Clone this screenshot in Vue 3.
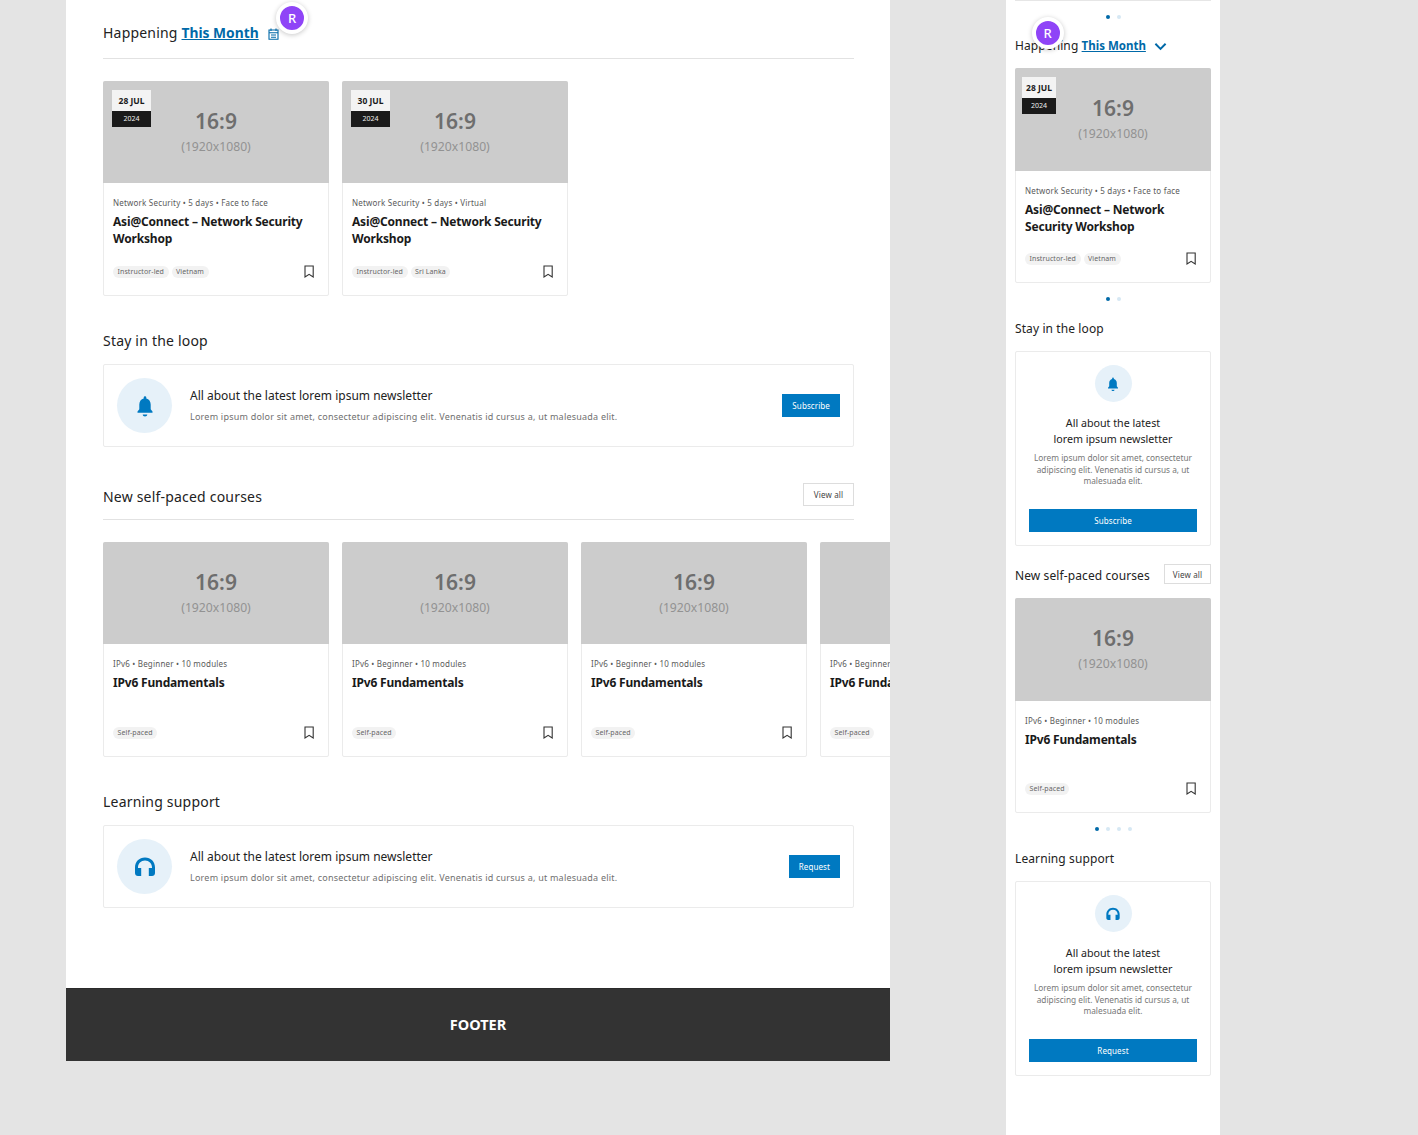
<script setup>
const happening = [
  { day: '28 JUL', meta: 'Network Security • 5 days • Face to face', title: 'Asi@Connect – Network Security Workshop', tags: ['Instructor-led', 'Vietnam'] },
  { day: '30 JUL', meta: 'Network Security • 5 days • Virtual', title: 'Asi@Connect – Network Security Workshop', tags: ['Instructor-led', 'Sri Lanka'] },
]
const course = { meta: 'IPv6 • Beginner • 10 modules', title: 'IPv6 Fundamentals', tags: ['Self-paced'] }
const courses = [course, course, course, course]
const mobileHappening = [happening[0]]
const desc = 'Lorem ipsum dolor sit amet, consectetur adipiscing elit. Venenatis id cursus a, ut malesuada elit.'
const banners = {
  loop: { title: 'All about the latest lorem ipsum newsletter', action: 'Subscribe' },
  support: { title: 'All about the latest lorem ipsum newsletter', action: 'Request' },
}
</script>

<template>
  <div class="page">
    <main class="desk">
      <div class="content">
        <div class="head first">
          <h2 class="h">Happening <a class="month">This Month</a>
            <svg class="cal" viewBox="0 0 11 12" width="11" height="12"><path d="M3 .5v2.500M8 .5v2.500M1 2h9v9.300H1zM1 4.800h9M3 7h5M3 9.200h5" fill="none" stroke="#0069a8" stroke-width="1.100"/></svg>
          </h2>
        </div>
        <div class="row">
          <article v-for="c in happening" :key="c.day" class="card">
            <div class="thumb">
              <div class="date"><b>{{ c.day }}</b><span>2024</span></div>
              <strong>16:9</strong><em>(1920x1080)</em>
            </div>
            <div class="body">
              <p class="meta">{{ c.meta }}</p>
              <h3>{{ c.title }}</h3>
              <div class="foot">
                <span v-for="t in c.tags" :key="t" class="tag">{{ t }}</span>
                <svg class="mark" viewBox="0 0 12 13" width="12" height="13"><path d="M2 1h8.200v11L6.100 9.300 2 12z" fill="none" stroke="#333" stroke-width="1.100"/></svg>
              </div>
            </div>
          </article>
        </div>

        <h2 class="h plain">Stay in the loop</h2>
        <section class="banner">
          <div class="round">
            <svg viewBox="0 0 24 24" width="24" height="24"><path fill="#0079c1" d="M12 22.500c1.300 0 2.300-.9 2.300-2h-4.600c0 1.100 1 2 2.300 2zM19.500 17.500l-1.800-2.200V10.500c0-3-1.700-5.400-4.400-6V3.600a1.300 1.300 0 0 0-2.600 0v.9c-2.700.6-4.400 3-4.400 6v4.800l-1.800 2.200v1.300h15z"/></svg>
          </div>
          <div class="text">
            <h4>{{ banners.loop.title }}</h4>
            <p>{{ desc }}</p>
          </div>
          <button class="cta">{{ banners.loop.action }}</button>
        </section>

        <div class="head second">
          <h2 class="h">New self-paced courses</h2>
          <button class="ghost">View all</button>
        </div>
        <div class="row">
          <article v-for="(c, i) in courses" :key="i" class="card">
            <div class="thumb"><strong>16:9</strong><em>(1920x1080)</em></div>
            <div class="body">
              <p class="meta">{{ c.meta }}</p>
              <h3>{{ c.title }}</h3>
              <div class="foot">
                <span v-for="t in c.tags" :key="t" class="tag">{{ t }}</span>
                <svg class="mark" viewBox="0 0 12 13" width="12" height="13"><path d="M2 1h8.200v11L6.100 9.300 2 12z" fill="none" stroke="#333" stroke-width="1.100"/></svg>
              </div>
            </div>
          </article>
        </div>

        <h2 class="h plain">Learning support</h2>
        <section class="banner">
          <div class="round">
            <svg viewBox="0 0 24 24" width="24" height="24"><path fill="#0079c1" d="M12 2.500C6.200 2.500 2 6.800 2 12.500v5.500c0 1.700 1.300 3 3 3h3.200v-8H5v-.5c0-4 3-7 7-7s7 3 7 7v.5h-3.200v8H19c1.700 0 3-1.300 3-3v-5.500c0-5.700-4.200-10-10-10z"/></svg>
          </div>
          <div class="text">
            <h4>{{ banners.support.title }}</h4>
            <p>{{ desc }}</p>
          </div>
          <button class="cta">{{ banners.support.action }}</button>
        </section>
      </div>
      <footer class="footer">FOOTER</footer>
    </main>

    <aside class="mob">
      <div class="stub"></div>
      <div class="dots"><i class="on"></i><i></i></div>
      <h2 class="h mhead">Happening <a class="month">This Month</a>
        <svg class="chev" viewBox="0 0 14 9" width="13" height="9"><path d="M1.500 1.500 7 7l5.500-5.500" fill="none" stroke="#0069a8" stroke-width="2.100"/></svg>
      </h2>
      <article v-for="c in mobileHappening" :key="c.day" class="card mcard">
        <div class="thumb">
          <div class="date small"><b>{{ c.day }}</b><span>2024</span></div>
          <strong>16:9</strong><em>(1920x1080)</em>
        </div>
        <div class="body">
          <p class="meta">{{ c.meta }}</p>
          <h3>{{ c.title }}</h3>
          <div class="foot">
            <span v-for="t in c.tags" :key="t" class="tag">{{ t }}</span>
            <svg class="mark" viewBox="0 0 12 13" width="12" height="13"><path d="M2 1h8.200v11L6.100 9.300 2 12z" fill="none" stroke="#333" stroke-width="1.100"/></svg>
          </div>
        </div>
      </article>
      <div class="dots"><i class="on"></i><i></i></div>

      <h2 class="h mtitle">Stay in the loop</h2>
      <section class="mbanner">
        <div class="round sm">
          <svg viewBox="0 0 24 24" width="16" height="16"><path fill="#0079c1" d="M12 22.500c1.300 0 2.300-.9 2.300-2h-4.600c0 1.100 1 2 2.300 2zM19.500 17.500l-1.800-2.200V10.500c0-3-1.700-5.400-4.400-6V3.600a1.300 1.300 0 0 0-2.600 0v.9c-2.700.6-4.400 3-4.400 6v4.800l-1.800 2.200v1.300h15z"/></svg>
        </div>
        <h4>All about the latest<br>lorem ipsum newsletter</h4>
        <p>{{ desc }}</p>
        <button class="cta wide">Subscribe</button>
      </section>

      <div class="mrow">
        <h2 class="h">New self-paced courses</h2>
        <button class="ghost">View all</button>
      </div>
      <article class="card mcard next">
        <div class="thumb"><strong>16:9</strong><em>(1920x1080)</em></div>
        <div class="body">
          <p class="meta">{{ course.meta }}</p>
          <h3>{{ course.title }}</h3>
          <div class="foot">
            <span class="tag">Self-paced</span>
            <svg class="mark" viewBox="0 0 12 13" width="12" height="13"><path d="M2 1h8.200v11L6.100 9.300 2 12z" fill="none" stroke="#333" stroke-width="1.100"/></svg>
          </div>
        </div>
      </article>
      <div class="dots four"><i class="on"></i><i></i><i></i><i></i></div>

      <h2 class="h mtitle">Learning support</h2>
      <section class="mbanner">
        <div class="round sm">
          <svg viewBox="0 0 24 24" width="16" height="16"><path fill="#0079c1" d="M12 2.500C6.200 2.500 2 6.800 2 12.500v5.500c0 1.700 1.300 3 3 3h3.200v-8H5v-.5c0-4 3-7 7-7s7 3 7 7v.5h-3.200v8H19c1.700 0 3-1.300 3-3v-5.500c0-5.700-4.200-10-10-10z"/></svg>
        </div>
        <h4>All about the latest<br>lorem ipsum newsletter</h4>
        <p>{{ desc }}</p>
        <button class="cta wide">Request</button>
      </section>
    </aside>

    <div class="avatar a1">R</div>
    <div class="avatar a2">R</div>
  </div>
</template>

<style>
html, body { margin: 0; background: #e4e4e4; }
</style>

<style scoped>
.page {
  position: relative;
  display: flex;
  gap: 116px;
  height: 1135px;
  padding-left: 66px;
  box-sizing: border-box;
  overflow: hidden;
  background: #e4e4e4;
  font-family: "Noto Sans", "Open Sans", sans-serif;
  color: #222;
}
h2, h3, h4, p { margin: 0; }
.desk {
  width: 824px;
  height: 1061px;
  background: #fff;
  display: flex;
  flex-direction: column;
  overflow: hidden;
}
.content { padding: 0 36px 0 37px; flex: 1; }
.head {
  display: flex;
  justify-content: space-between;
  align-items: flex-start;
  border-bottom: 1px solid #e2e2e2;
  padding-bottom: 10px;
  margin-bottom: 22px;
}
.head.first { padding-top: 21px; padding-bottom: 13px; height: 24px; }
.head.second { margin-top: 38px; }
.head .ghost { margin-top: -2px; }
.h {
  font-size: 14px;
  line-height: 24px;
  font-weight: 400;
  letter-spacing: .2px;
  color: #222;
  white-space: nowrap;
}
.plain { margin-top: 33px; margin-bottom: 11px; }
.month {
  color: #0069a8;
  font-weight: 700;
  font-size: 13.800px;
  letter-spacing: 0;
  text-decoration: underline;
}
.cal { margin-left: 9px; vertical-align: -2px; }
.row { display: flex; gap: 13px; width: 820px; }
.card {
  flex: 0 0 226px;
  height: 215px;
  box-sizing: border-box;
  border: 1px solid #ebebeb;
  border-radius: 2px;
  background: #fff;
  display: flex;
  flex-direction: column;
}
.thumb {
  position: relative;
  box-sizing: border-box;
  height: 102px;
  margin: -1px -1px 0;
  padding-top: 27px;
  flex: none;
  background: #ccc;
  border-radius: 2px 2px 0 0;
  display: flex;
  flex-direction: column;
  align-items: center;
}
.thumb strong { font-size: 21px; line-height: 26px; font-weight: 600; color: #6e6e6e; }
.thumb em { font-size: 12.200px; line-height: 18px; font-style: normal; color: #929292; margin-top: 4px; }
.date {
  position: absolute;
  left: 9px;
  top: 9px;
  width: 39px;
  display: flex;
  flex-direction: column;
  text-align: center;
}
.date b { background: #f3f3f3; color: #1a1a1a; font-size: 8.500px; line-height: 21px; }
.date span { background: #1a1a1a; color: #eee; font-size: 7px; line-height: 16px; }
.date.small { width: 34px; left: 7px; }
.body {
  flex: 1;
  display: flex;
  flex-direction: column;
  padding: 14px 9px 0;
  min-height: 0;
}
.meta { font-size: 8px; line-height: 12px; color: #5a5a5a; white-space: nowrap; letter-spacing: .2px; }
.body h3 {
  font-size: 12px;
  line-height: 17px;
  font-weight: 700;
  letter-spacing: -.18px;
  color: #1a1a1a;
  margin-top: 4px;
  height: 34px;
}
.foot {
  display: flex;
  align-items: center;
  gap: 3px;
  margin-top: 18px;
}
.tag {
  font-size: 7px;
  line-height: 12px;
  padding: 0 4.500px;
  letter-spacing: .1px;
  border-radius: 6px;
  background: #f2f2f2;
  color: #666;
  white-space: nowrap;
}
.mark { margin-left: auto; margin-right: 4px; }
.banner {
  display: flex;
  align-items: center;
  box-sizing: border-box;
  height: 83px;
  border: 1px solid #ebebeb;
  border-radius: 2px;
  padding: 0 13px;
}
.round {
  flex: none;
  width: 55px;
  height: 55px;
  border-radius: 50%;
  background: #e6f1f9;
  display: flex;
  align-items: center;
  justify-content: center;
}
.text { flex: 1; margin-left: 18px; margin-top: -1px; }
.text h4 { font-size: 12px; line-height: 18px; font-weight: 400; color: #222; }
.text p { font-size: 9px; line-height: 14px; color: #707070; margin-top: 5px; letter-spacing: .22px; }
.cta {
  border: 0;
  background: #0079c1;
  color: #fff;
  font: inherit;
  font-size: 8px;
  letter-spacing: .1px;
  height: 23px;
  padding: 0 10px;
  border-radius: 0;
}
.cta.wide { width: 168px; padding: 0; margin-top: auto; flex: none; }
.ghost {
  background: #fff;
  border: 1px solid #ddd;
  color: #444;
  font: inherit;
  font-size: 8px;
  letter-spacing: .15px;
  height: 23px;
  width: 51px;
  padding: 0;
}
.footer {
  height: 73px;
  flex: none;
  box-sizing: border-box;
  padding-bottom: 2px;
  background: #333;
  color: #fff;
  font-weight: 700;
  font-size: 14.500px;
  display: flex;
  align-items: center;
  justify-content: center;
  box-shadow: inset 0 1px 0 #2b2b2b;
}
.mob {
  width: 214px;
  height: 1135px;
  background: #fff;
  box-sizing: border-box;
  padding: 0 9px;
  display: flex;
  flex-direction: column;
}
.stub { height: 1px; width: 196px; background: #e6e6e6; flex: none; }
.dots { display: flex; justify-content: center; gap: 7px; margin-top: 14px; height: 4px; flex: none; width: 196px; }
.dots i { width: 4px; height: 4px; border-radius: 50%; background: #d6e8f4; }
.dots i.on { background: #0069a8; }
.mhead { margin-top: 14px; font-size: 12px; letter-spacing: .1px; height: 24px; line-height: 26px; flex: none; }
.mhead .month { font-size: 11.500px; }
.chev { margin-left: 8px; vertical-align: -1px; }
.mcard { flex: none; width: 196px; margin-top: 11px; }
.mcard .thumb { height: 103px; }
.mcard .foot { margin-top: 17px; }
.mcard.next { margin-top: 10px; }
.mtitle { margin-top: 15px; font-size: 12px; letter-spacing: .1px; height: 24px; line-height: 26px; flex: none; }
.mbanner {
  flex: none;
  margin-top: 11px;
  height: 195px;
  width: 196px;
  box-sizing: border-box;
  border: 1px solid #ebebeb;
  border-radius: 2px;
  padding: 13px;
  display: flex;
  flex-direction: column;
  align-items: center;
  text-align: center;
}
.round.sm { width: 37px; height: 37px; }
.mbanner h4 { font-size: 10.700px; line-height: 16px; font-weight: 400; color: #222; margin-top: 13px; }
.mbanner p { font-size: 8.300px; line-height: 11.500px; color: #777; margin-top: 5px; }
.mrow {
  flex: none;
  display: flex;
  justify-content: space-between;
  align-items: center;
  margin-top: 18px;
  width: 196px;
  height: 24px;
}
.mrow .h { font-size: 12px; letter-spacing: .1px; line-height: 26px; }
.mrow .ghost { width: 47px; height: 20px; margin-top: -4px; }
.avatar {
  position: absolute;
  width: 24px;
  height: 24px;
  border-radius: 50%;
  background: #8f44f7;
  color: #fff;
  font-size: 13px;
  font-weight: 500;
  display: flex;
  align-items: center;
  justify-content: center;
  border: 4px solid #fff;
  box-shadow: 0 1px 5px rgba(0,0,0,.22);
}
.a1 { left: 276px; top: 2px; }
.a2 { left: 1031.500px; top: 17px; }
</style>
